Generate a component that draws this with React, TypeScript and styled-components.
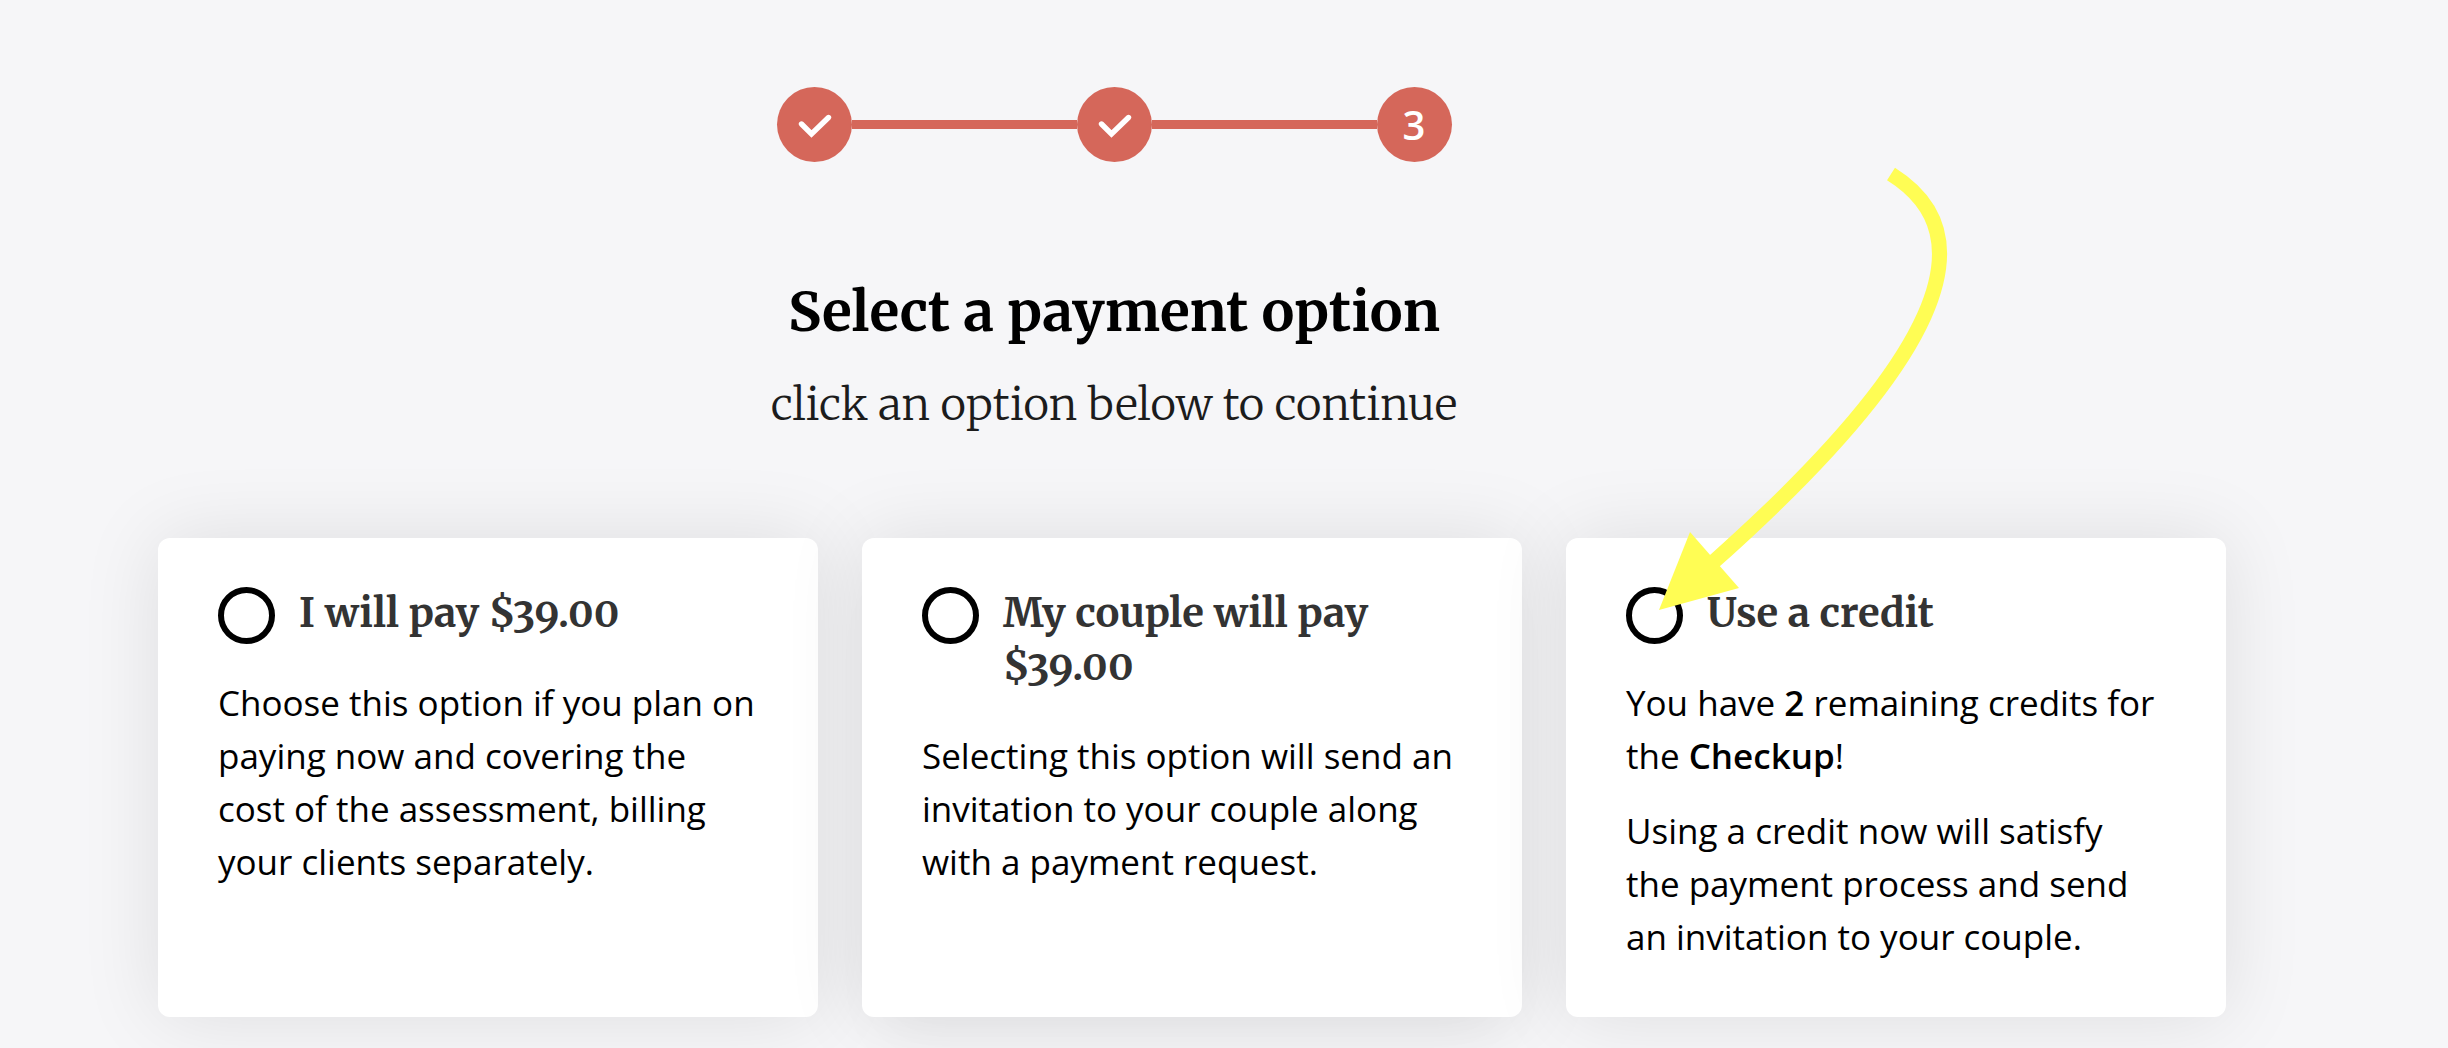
import React from "react";
import styled, { createGlobalStyle } from "styled-components";

const serif = `"Merriweather", "DejaVu Serif Condensed", "DejaVu Serif", "Liberation Serif", serif`;
const sans = `"Open Sans", "Noto Sans", sans-serif`;
const coral = "#d5675a";

const GlobalStyle = createGlobalStyle`
  *, *::before, *::after { box-sizing: border-box; }
  html, body { margin: 0; background: #f6f6f8; overflow-x: hidden; }
  html { overflow-y: hidden; }
`;

const Page = styled.main`
  min-height: 100vh;
  padding: 87px 220px 31px 0;
  background: #f6f6f8;
  color: #000;
  font-family: ${sans};
`;

const Stepper = styled.ol`
  display: flex;
  align-items: center;
  justify-content: center;
  margin: 0;
  padding: 0;
  list-style: none;
`;

const Step = styled.li`
  display: flex;
  align-items: center;

  & + &::before {
    content: "";
    width: 225px;
    height: 9px;
    background: ${coral};
  }
`;

const StepDot = styled.span`
  display: flex;
  align-items: center;
  justify-content: center;
  width: 75px;
  height: 75px;
  border-radius: 50%;
  background: ${coral};
  color: #fff;
  font-size: 40px;
  font-weight: 600;
  line-height: 53px;
`;

const Intro = styled.header`
  padding: 110px 0 97px;
  text-align: center;
  font-family: ${serif};
`;

const Title = styled.h1`
  margin: 0;
  font-size: 55px;
  font-weight: 700;
  line-height: 80px;
`;

const Subtitle = styled.p`
  margin: 17px 0 0;
  color: #1c1c1c;
  font-size: 44px;
  font-weight: 300;
  line-height: 72px;
`;

const Options = styled.div`
  display: grid;
  grid-template-columns: repeat(3, minmax(0, 1fr));
  gap: 44px;
  margin: 0;
  padding: 0 2px 0 158px;
`;

const Card = styled.label`
  position: relative;
  padding: 49px 62px 54px 60px;
  border-radius: 12px;
  background: #fff;
  box-shadow: 0 0 80px rgba(0, 0, 0, 0.1);
  cursor: pointer;

  &:nth-child(2) {
    box-shadow: 0 0 80px rgba(0, 0, 0, 0.1), 0 40px 60px -20px rgba(0, 0, 0, 0.03);
  }
`;

const CardHead = styled.span`
  display: flex;
  align-items: flex-start;
  gap: 24px;
`;

const Radio = styled.input`
  appearance: none;
  flex: none;
  width: 57px;
  height: 57px;
  margin: 0;
  border: 6px solid #000;
  border-radius: 50%;
  background: #fff;

  &:checked {
    background: radial-gradient(${coral} 50%, #fff 54%);
  }
`;

const CardTitle = styled.span`
  padding-bottom: 36px;
  color: #333;
  font-family: ${serif};
  font-size: 40px;
  font-weight: 700;
  font-variant-numeric: oldstyle-nums;
  line-height: 53px;
`;

const CardText = styled.span`
  display: block;
  font-size: 35px;
  line-height: 53px;

  & + & {
    margin-top: 22px;
  }

  strong {
    font-weight: 600;
  }
`;

const Pointer = styled.svg`
  position: absolute;
  top: -378px;
  left: 84px;
  width: 300px;
  height: 460px;
  pointer-events: none;
`;

const Check = () => (
  <svg width="75" height="75" viewBox="0 0 75 75" fill="none" role="img" aria-label="Completed">
    <path d="M24.5 37 L34.5 47 L51.5 30.5" stroke="#fff" strokeWidth="5.4" strokeLinecap="round" />
  </svg>
);

const Arrow = () => (
  <Pointer viewBox="0 0 300 460" aria-hidden="true">
    <path d="M241 14 C340 76 291 200 60 405" fill="none" stroke="#fffd54" strokeWidth="15" />
    <path d="M9 450 L40 372 L89 428 Z" fill="#fffd54" />
  </Pointer>
);

interface Option {
  id: string;
  title: string;
  body: React.ReactNode[];
  highlighted?: boolean;
}

const options: Option[] = [
  {
    id: "self",
    title: "I will pay $39.00",
    body: [
      "Choose this option if you plan on paying now and covering the cost of the assessment, billing your clients separately.",
    ],
  },
  {
    id: "couple",
    title: "My couple will pay $39.00",
    body: ["Selecting this option will send an invitation to your couple along with a payment request."],
  },
  {
    id: "credit",
    title: "Use a credit",
    body: [
      <>
        You have <strong>2</strong> remaining credits for the <strong>Checkup</strong>!
      </>,
      "Using a credit now will satisfy the payment process and send an invitation to your couple.",
    ],
    highlighted: true,
  },
];

export default function App() {
  return (
    <>
      <GlobalStyle />
      <Page>
        <Stepper aria-label="Progress">
          <Step>
            <StepDot><Check /></StepDot>
          </Step>
          <Step>
            <StepDot><Check /></StepDot>
          </Step>
          <Step aria-current="step">
            <StepDot>3</StepDot>
          </Step>
        </Stepper>
        <Intro>
          <Title>Select a payment option</Title>
          <Subtitle>click an option below to continue</Subtitle>
        </Intro>
        <Options role="radiogroup" aria-label="Payment option">
          {options.map((option) => (
            <Card key={option.id} htmlFor={option.id}>
              <CardHead>
                <Radio type="radio" name="payment" id={option.id} />
                <CardTitle>{option.title}</CardTitle>
              </CardHead>
              {option.body.map((text, i) => (
                <CardText key={i}>{text}</CardText>
              ))}
              {option.highlighted && <Arrow />}
            </Card>
          ))}
        </Options>
      </Page>
    </>
  );
}
